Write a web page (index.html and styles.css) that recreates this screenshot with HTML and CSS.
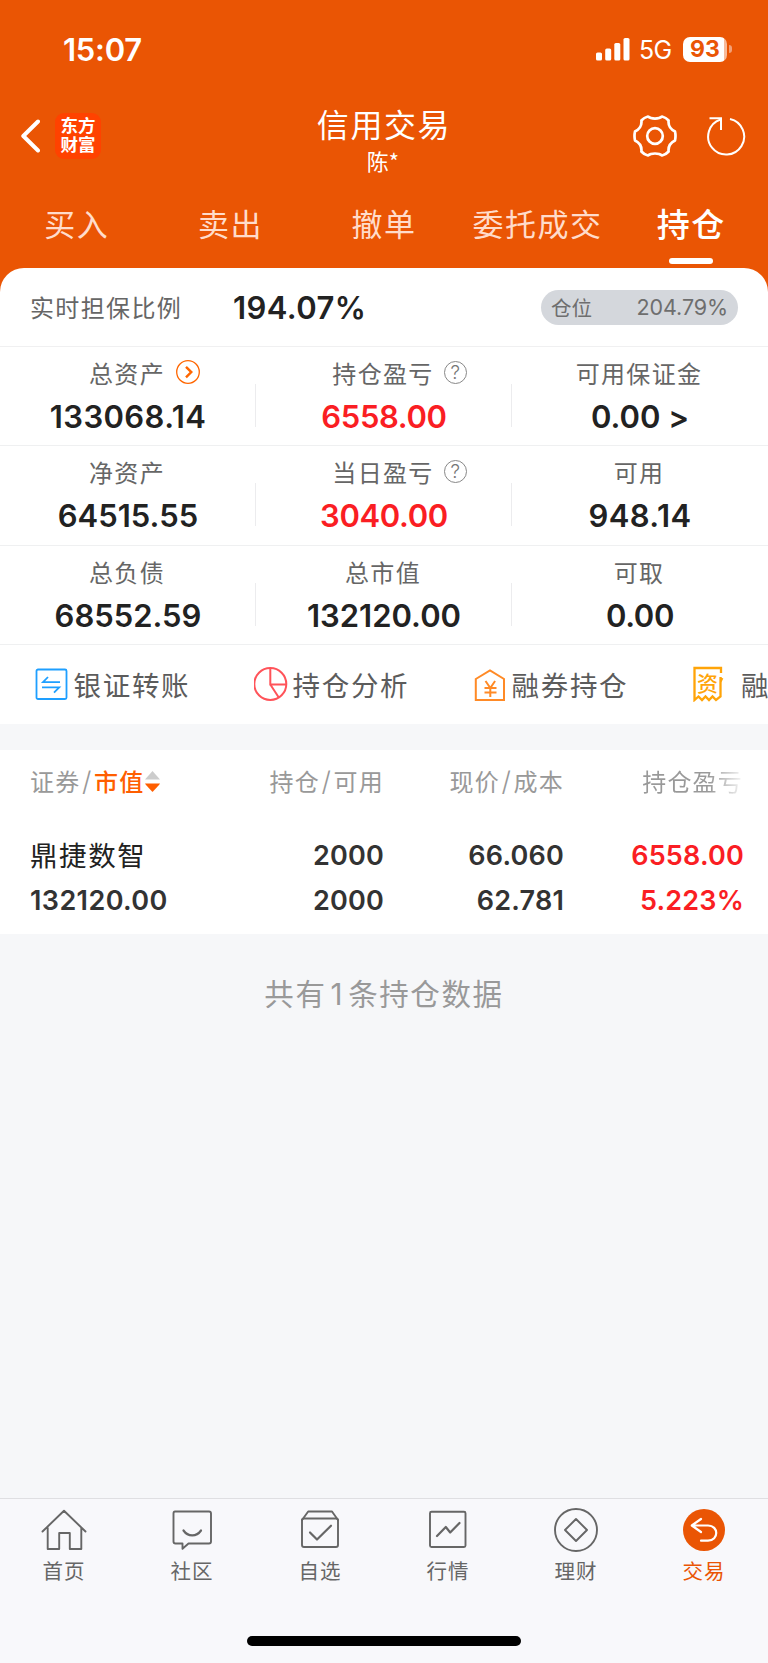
FILE: index.html
```html
<!DOCTYPE html>
<html lang="zh-CN">
<head>
<meta charset="utf-8">
<title>信用交易</title>
<link rel="stylesheet" href="styles.css">
</head>
<body>
<div class="app">
  <header class="top">
    <div class="status">
      <span class="clock">15:07</span>
      <svg class="signal" width="34" height="23" viewBox="0 0 34 23" fill="#fff"><rect x="0" y="14.5" width="6" height="8" rx="1.6"/><rect x="9.2" y="10.5" width="6" height="12" rx="1.6"/><rect x="18.3" y="5" width="6" height="17.500" rx="1.600"/><rect x="27.500" y="0" width="6" height="22.500" rx="1.600"/></svg>
      <span class="net">5G</span>
      <span class="battery">93</span><i class="battery-cap"></i>
    </div>
    <div class="nav">
      <svg class="back" width="20" height="36" viewBox="0 0 20 36" fill="none" stroke="#fff" stroke-width="4" stroke-linecap="round" stroke-linejoin="round"><path d="M18 3.500 3.300 18 18 32.500"/></svg>
      <div class="brand"><span>东方</span><span>财富</span></div>
      <div class="heading"><h1>信用交易</h1><p>陈*</p></div>
      <svg class="gear" width="44" height="44" viewBox="-22 -22 44 44" fill="none" stroke="#fff" stroke-width="2.700" stroke-linejoin="round"><circle r="7.800"/><path d="M-7-19.500C-4-16.800 4-16.800 7-19.500Q11-18.500 13.600-15.500C13-10.500 16-6.500 20-4.500Q21 0 20 4.500C16 6.500 13 10.500 13.600 15.500Q11 18.500 7 19.500C4 16.800-4 16.800-7 19.500Q-11 18.500-13.600 15.500C-13 10.500-16 6.500-20 4.500Q-21 0-20-4.500C-16-6.500-13-10.500-13.600-15.500Q-11-18.500-7-19.500Z"/></svg>
      <svg class="reload" width="40" height="40" viewBox="0 0 40 40" fill="none" stroke="#fff" stroke-width="2"><path d="M24 3A18 18 0 1 1 14.500 3.500"/><path d="M3.500 2.300H15V14"/></svg>
    </div>
    <nav class="tabs">
      <span>买入</span><span>卖出</span><span>撤单</span><span>委托成交</span><span class="on">持仓</span>
    </nav>
  </header>

  <section class="panel">
    <div class="ratio">
      <span class="label">实时担保比例</span>
      <b class="num roomy">194.07%</b>
      <div class="pill"><span>仓位</span><em>204.79%</em></div>
    </div>
    <div class="row">
      <div class="cell"><div class="cap"><span class="label">总资产</span><svg class="more" width="24" height="24" viewBox="0 0 24 24" fill="none" stroke="#f60"><circle cx="12" cy="12" r="11.300" stroke-width="1.300"/><path d="m10 6.800 5.300 5.300L10 17.400" stroke-width="2.400"/></svg></div><b class="num roomy">133068.14</b></div>
      <div class="cell"><div class="cap"><span class="label">持仓盈亏</span><i class="help">?</i></div><b class="num red tight">6558.00</b></div>
      <div class="cell"><div class="cap"><span class="label">可用保证金</span></div><b class="num">0.00 &gt;</b></div>
    </div>
    <div class="row">
      <div class="cell"><div class="cap"><span class="label">净资产</span></div><b class="num">64515.55</b></div>
      <div class="cell"><div class="cap"><span class="label">当日盈亏</span><i class="help">?</i></div><b class="num red tight">3040.00</b></div>
      <div class="cell"><div class="cap"><span class="label">可用</span></div><b class="num roomy">948.14</b></div>
    </div>
    <div class="row">
      <div class="cell"><div class="cap"><span class="label">总负债</span></div><b class="num">68552.59</b></div>
      <div class="cell"><div class="cap"><span class="label">总市值</span></div><b class="num">132120.00</b></div>
      <div class="cell"><div class="cap"><span class="label">可取</span></div><b class="num tight">0.00</b></div>
    </div>
    <div class="quick">
      <div class="link"><svg width="36" height="36" viewBox="0 0 36 36" fill="none" stroke="#1e9fff" stroke-width="1.800"><rect x="1.500" y="3.500" width="30" height="29.500" rx="1.500"/><path d="M13 11 8 16.200h17M7 21.300h17.200L19 26.600"/></svg><span>银证转账</span></div>
      <div class="link"><svg width="36" height="36" viewBox="0 0 36 36" fill="none" stroke="#ff5359" stroke-width="2"><circle cx="16.300" cy="18" r="16"/><path d="M16.300 2v16.500h16M16.300 18.500l8.500 13"/></svg><span>持仓分析</span></div>
      <div class="link"><svg width="36" height="36" viewBox="0 0 36 36" fill="none" stroke="#ff8a26" stroke-width="2"><path d="M2.800 13 17 4.500l14 8.500V34H2.800Z"/><path d="m12.500 15 4.800 7 4.800-7M17.300 21v10M11.500 22h12M11.500 26.600h12" stroke-width="2"/></svg><span>融券持仓</span></div>
      <div class="link wide"><div class="bill"><svg width="32" height="36" viewBox="0 0 32 36" fill="none" stroke="#ffa408" stroke-width="2.300"><path d="M29 7V2H2.500v32l4-3.500 3.500 3.500 3.500-3.500 3.500 3.500 3.500-3.500 3.500 3.500 4.500-3.500V11"/><path d="M28 11l3.300 1.500-2 4Z" fill="#ffa408" stroke="none"/></svg><span>资</span></div><span>融券</span></div>
    </div>
  </section>

  <section class="table">
    <div class="thead">
      <span class="c1">证券<i>/</i><em>市值</em><svg width="15" height="22" viewBox="0 0 15 22"><path d="M7.500 0 15 8.500H0Z" fill="#ccc"/><path d="M0 12.500h15l-1 1.500-6 6.500q-.5.500-1 0L1 14Z" fill="#ff5e00"/></svg></span>
      <span class="c2">持仓<i>/</i>可用</span>
      <span class="c3">现价<i>/</i>成本</span>
      <span class="c4">持仓盈亏</span>
    </div>
    <div class="trow"><span class="c1 name">鼎捷数智</span><b class="c2">2000</b><b class="c3">66.060</b><b class="c4 red">6558.00</b></div>
    <div class="trow"><b class="c1 roomy">132120.00</b><b class="c2">2000</b><b class="c3">62.781</b><b class="c4 red">5.223%</b></div>
  </section>
  <p class="count">共有<i>1</i>条持仓数据</p>

  <footer class="dock">
    <nav class="items">
      <div class="item"><svg width="46" height="46" viewBox="0 0 46 46"><path d="M1.500 24.500 23 3.800l21.500 20.700M6.700 20.500V42h11.500V26h10.600v16h11.500V20.500"/></svg><span>首页</span></div>
      <div class="item"><svg width="46" height="46" viewBox="0 0 46 46"><path d="M6 4.500h34q2 0 2 2v28q0 2-2 2H19.500L13.500 41.800V36.500H6.500q-2 0-2-2v-28q0-2 1.500-2Z"/><path d="M14.500 23.500c4.500 6.500 13 6.500 17.500 0" stroke-width="2.200"/></svg><span>社区</span></div>
      <div class="item"><svg width="46" height="46" viewBox="0 0 46 46"><rect x="5" y="11.500" width="36" height="28.500" rx="2"/><path d="M5 13l6.200-8.500H35L41 13"/><path d="m13 25.500 7 7 14-13.800" stroke-width="2.200"/></svg><span>自选</span></div>
      <div class="item"><svg width="46" height="46" viewBox="0 0 46 46"><rect x="5" y="4.800" width="35.500" height="35.200" rx="1.500"/><path d="m12 29 8.800-9 4.400 5.500 9.300-9.500" stroke-width="2.200"/></svg><span>行情</span></div>
      <div class="item"><svg width="46" height="46" viewBox="0 0 46 46"><circle cx="23" cy="23" r="21"/><path d="m23 12 11 11-11 11-11-11Z" stroke-linejoin="round"/></svg><span>理财</span></div>
      <div class="item on"><svg width="46" height="46" viewBox="0 0 46 46"><circle cx="23" cy="23" r="21" fill="#ea5504" stroke="none"/><path d="M20 12 10.800 18.500 20 25M11.500 18.500H27c11 0 11 15.200 0 15.200h-7" stroke="#fff" stroke-width="2.200"/></svg><span>交易</span></div>
    </nav>
    <div class="homebar"></div>
  </footer>
</div>
</body>
</html>
```
FILE: styles.css
```css
* { box-sizing: border-box; }
body { margin: 0; background: #f6f7f9; font-family: "Noto Sans CJK SC", sans-serif; color: #222; }
i, em { font-style: normal; }
h1, p { margin: 0; font-weight: 400; }
svg { flex: none; display: block; }
.app { width: 768px; height: 1663px; display: flex; flex-direction: column; overflow: hidden; }

.top { height: 292px; flex: none; background: #ea5504; color: #fff; }
.status { height: 98px; display: flex; align-items: center; padding: 0 36px 0 63px; font-family: Inter, sans-serif; }
.clock { font-size: 31px; font-weight: 600; letter-spacing: -.25px; flex: 1; }
.net { font-size: 25px; margin: 2px 1px 0 9px; width: 33px; letter-spacing: -.8px; }
.battery { width: 44px; height: 25px; margin-left: 10px; border-radius: 7px; background: linear-gradient(90deg, #fff 41px, #f7bb9b 41px); color: #ea5504; font-size: 23px; line-height: 25px; font-weight: 700; text-align: center; }
.battery-cap { width: 3px; height: 8px; margin-left: 2px; border-radius: 0 4px 4px 0; background: #f3a077; }
.nav { height: 88px; display: flex; align-items: center; padding: 0 22px 0 20px; }
.back { margin-top: -12px; }
.brand { width: 46px; height: 46px; margin: -13px 0 0 15px; padding-top: 2px; border-radius: 9px; background: #ff4200; display: flex; flex-direction: column; align-items: center; justify-content: flex-start; font: 700 17.500px/19.500px "Noto Sans CJK SC", sans-serif; }
.heading { flex: 1; display: flex; flex-direction: column; align-items: center; padding-left: 34px; }
.heading h1 { font-size: 32px; line-height: 42px; letter-spacing: 1.600px; margin-top: 4px; }
.heading p { font-size: 22px; line-height: 32px; margin: 0 2px 10px 0; }
.gear { margin-top: -13px; }
.reload { margin: -13px 0 0 29px; }
.tabs { height: 82px; display: grid; grid-template-columns: repeat(5, 1fr); text-align: center; font-size: 31px; line-height: 74px; letter-spacing: 1.500px; color: #ffdccb; }
.tabs .on { color: #fff; font-size: 33px; font-weight: 500; display: flex; flex-direction: column; align-items: center; }
.tabs .on::after { content: ""; width: 44px; height: 6px; border-radius: 3px; background: #fff; margin-top: -2px; }

.panel { margin-top: -24px; border-radius: 24px 24px 0 0; background: #fff; height: 456px; flex: none; }
.label { font-size: 24px; letter-spacing: 1.350px; color: #666; white-space: nowrap; }
.num { font: 600 31px/36px Inter, sans-serif; font-feature-settings: "calt" 0; color: #222; white-space: nowrap; }
.num.roomy { letter-spacing: .4px; }
.num.tight { letter-spacing: -.35px; }
.red, .num.red { color: #fa1e23; }
.ratio { height: 79px; border-bottom: 1px solid #f0f0f1; display: flex; align-items: center; padding: 0 30px; }
.ratio .label { width: 203px; margin-top: -1px; }
.ratio .num { flex: 1; margin-top: 2px; }
.pill { width: 197px; height: 35px; border-radius: 18px; background: #d4d7dc; color: #6e6e6e; display: flex; justify-content: space-between; align-items: center; padding: 0 10px 0 10px; font-size: 20.500px; line-height: 31px; }
.pill em { font: 400 21.500px/34px Inter, sans-serif; letter-spacing: -.1px; }
.row { height: 99.400px; border-bottom: 1.500px solid #eff0f1; display: grid; grid-template-columns: repeat(3, 1fr); }
.cell { display: flex; flex-direction: column; align-items: center; background: linear-gradient(#ececee, #ececee) right 37px / 1px 43px no-repeat; }
.cell:last-child { background: none; }
.cap { width: 100%; height: 52px; line-height: 50px; display: grid; grid-template-columns: 1fr auto 1fr; align-items: center; padding-right: 2px; }
.cap .label { grid-column: 2; }
.more { margin: -3px 0 0 11px; }
.help { width: 23px; height: 23px; margin: -2px 0 0 10px; border: 1.200px solid #888; border-radius: 50%; color: #777; font: 300 19px/21px Inter, sans-serif; text-align: center; }
.quick { height: 78px; display: flex; padding-left: 35px; overflow: hidden; }
.link { flex: none; width: 219px; height: 78px; display: flex; align-items: center; font-size: 27.500px; line-height: 78px; letter-spacing: 1.700px; color: #5c5c5c; }
.link > span { margin: -1px 0 0 2.500px; }
.link.wide > span { margin-left: 17px; }
.bill { display: grid; }
.bill > * { grid-area: 1 / 1; }
.bill span { font-size: 21px; line-height: 32px; color: #ffa408; padding-left: 5px; font-weight: 500; letter-spacing: 0; }

.table { margin-top: 26px; height: 184px; flex: none; background: #fff; padding-left: 30px; }
.thead, .trow { display: grid; grid-template-columns: 154px 200px 180px 180px; }
.thead { height: 83px; font-size: 24px; line-height: 61px; letter-spacing: 1.200px; color: #999; white-space: nowrap; }
.thead i { font: 300 27px/40px Inter, sans-serif; margin: 0 1.500px; }
.thead .c1 { display: flex; }
.thead .c1 i { line-height: 64px; }
.thead em { color: #ff5e00; font-weight: 500; }
.thead svg { margin: 21px 0 0 1px; }
.thead .c4 { margin-right: 1px; background: linear-gradient(90deg, #999 145px, #fff 182px); background-clip: text; -webkit-background-clip: text; color: transparent; }
.c2, .c3, .c4 { text-align: right; }
.trow { height: 45px; font: 600 27px/45px Inter, sans-serif; letter-spacing: .2px; color: #333; }
.trow b { font-weight: 600; }
.trow .roomy { letter-spacing: .4px; }
.name { font: 400 27.500px/43px "Noto Sans CJK SC", sans-serif; letter-spacing: 1.600px; white-space: nowrap; color: #222; }
.count { flex: 1; padding-top: 34px; text-align: center; font-size: 29.500px; line-height: 48px; letter-spacing: 1.600px; color: #999; }
.count i { font-family: Inter, sans-serif; margin: 0 4px; }

.dock { height: 165px; flex: none; border-top: 1px solid #dfdfe2; background: #f8f8fb; display: flex; flex-direction: column; align-items: center; }
.items { width: 768px; height: 137px; display: grid; grid-template-columns: repeat(6, 1fr); }
.item { display: flex; flex-direction: column; align-items: center; padding-top: 8px; font-size: 20.500px; line-height: 32px; letter-spacing: 1px; color: #666; }
.item svg { fill: none; stroke: #666; stroke-width: 1.900; stroke-linecap: round; stroke-linejoin: round; }
.item span { margin-top: 1px; }
.item.on { color: #ea5504; }
.homebar { width: 274px; height: 10px; border-radius: 5px; background: #000; }
```
